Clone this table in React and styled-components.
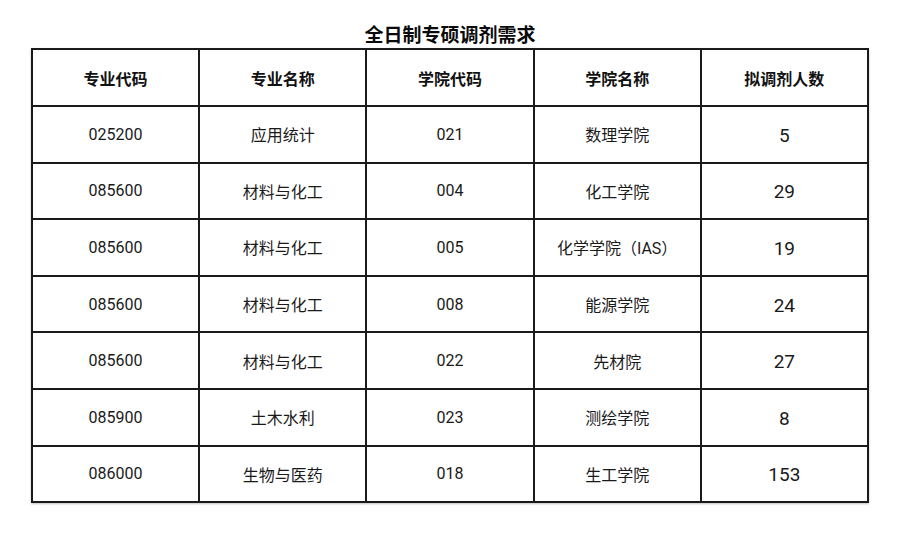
import React from "react";
import styled, { createGlobalStyle } from "styled-components";

const GlobalStyle = createGlobalStyle`
  html, body {
    margin: 0;
    padding: 0;
    background: #ffffff;
  }
  body {
    font-family: Roboto, "Noto Sans CJK SC", sans-serif;
    color: #111;
  }
`;

const Page = styled.div`
  width: 900px;
  height: 540px;
  display: flex;
  flex-direction: column;
  align-items: center;
  padding-top: 23px;
  box-sizing: border-box;
`;

const Title = styled.div`
  font-size: 19px;
  font-weight: 700;
  line-height: 25px;
  height: 25px;
  color: #0a0a0a;
`;

const Table = styled.table`
  width: 838px;
  border-collapse: collapse;
  table-layout: fixed;
  box-shadow: 0 1px 2px rgba(0, 0, 0, 0.25);
`;

const HeadRow = styled.tr`
  height: 57px;
`;

const Row = styled.tr`
  height: 56.6px;
`;

const HeadCell = styled.th`
  border: 2px solid #1a1a1a;
  font-size: 16px;
  font-weight: 700;
  text-align: center;
  padding: 0;
  color: #111;
`;

const Cell = styled.td`
  border: 2px solid #1a1a1a;
  font-size: ${(props) => (props.$big ? "19px" : "16px")};
  text-align: center;
  padding: 0;
  padding-top: ${(props) => (props.$big ? "2px" : "0")};
  color: #1a1a1a;
`;

const headers = ["专业代码", "专业名称", "学院代码", "学院名称", "拟调剂人数"];

const rows = [
  ["025200", "应用统计", "021", "数理学院", "5"],
  ["085600", "材料与化工", "004", "化工学院", "29"],
  ["085600", "材料与化工", "005", "化学学院（IAS）", "19"],
  ["085600", "材料与化工", "008", "能源学院", "24"],
  ["085600", "材料与化工", "022", "先材院", "27"],
  ["085900", "土木水利", "023", "测绘学院", "8"],
  ["086000", "生物与医药", "018", "生工学院", "153"],
];

const App = () => (
  <>
    <GlobalStyle />
    <Page>
      <Title>全日制专硕调剂需求</Title>
      <Table>
        <thead>
          <HeadRow>
            {headers.map((h) => (
              <HeadCell key={h}>{h}</HeadCell>
            ))}
          </HeadRow>
        </thead>
        <tbody>
          {rows.map((r, i) => (
            <Row key={i}>
              {r.map((c, j) => (
                <Cell key={j} $big={j === 4}>
                  {c}
                </Cell>
              ))}
            </Row>
          ))}
        </tbody>
      </Table>
    </Page>
  </>
);

export default App;
